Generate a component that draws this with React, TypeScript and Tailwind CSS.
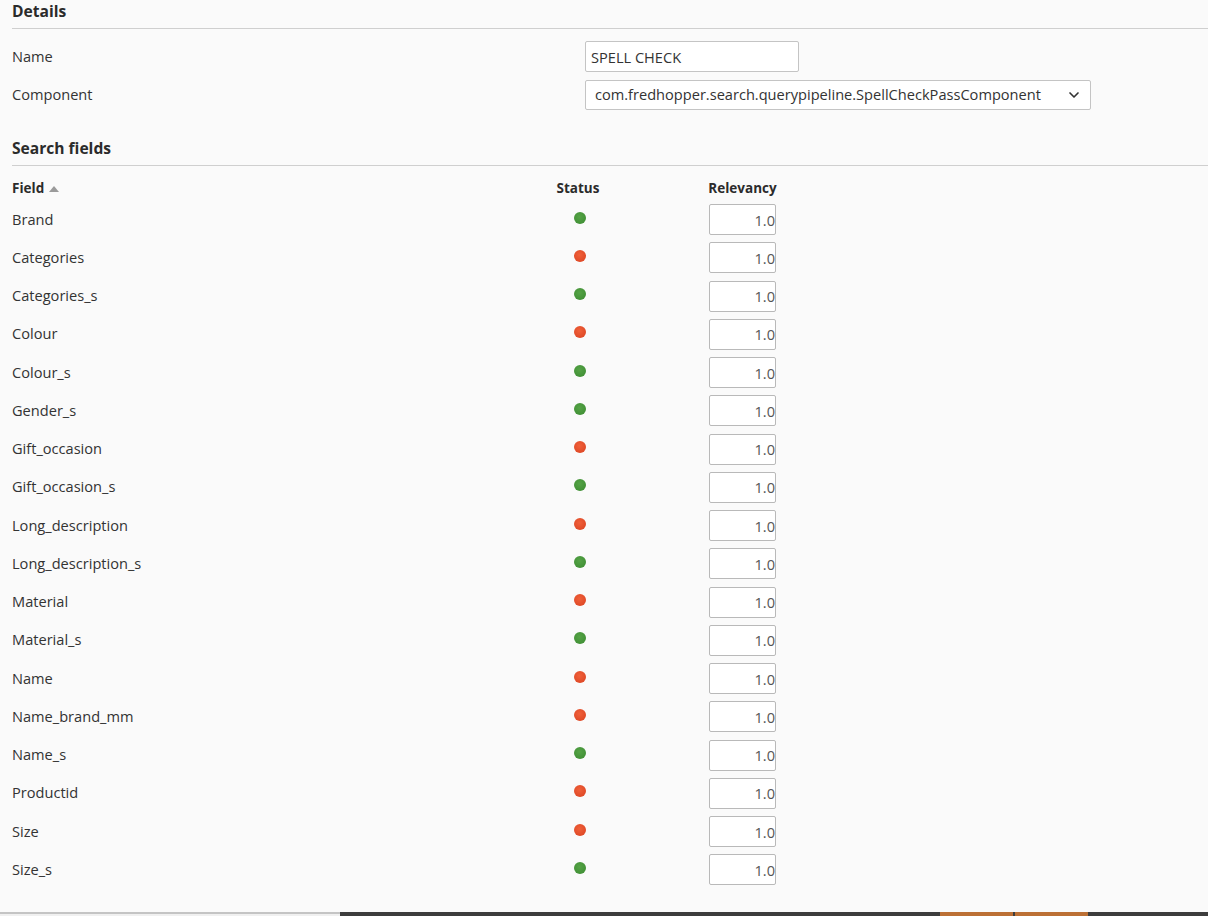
import { ChevronDown } from "lucide-react";

type Field = { name: string; active: boolean; relevancy: string };

const FIELDS: Field[] = [
  { name: "Brand", active: true, relevancy: "1.0" },
  { name: "Categories", active: false, relevancy: "1.0" },
  { name: "Categories_s", active: true, relevancy: "1.0" },
  { name: "Colour", active: false, relevancy: "1.0" },
  { name: "Colour_s", active: true, relevancy: "1.0" },
  { name: "Gender_s", active: true, relevancy: "1.0" },
  { name: "Gift_occasion", active: false, relevancy: "1.0" },
  { name: "Gift_occasion_s", active: true, relevancy: "1.0" },
  { name: "Long_description", active: false, relevancy: "1.0" },
  { name: "Long_description_s", active: true, relevancy: "1.0" },
  { name: "Material", active: false, relevancy: "1.0" },
  { name: "Material_s", active: true, relevancy: "1.0" },
  { name: "Name", active: false, relevancy: "1.0" },
  { name: "Name_brand_mm", active: false, relevancy: "1.0" },
  { name: "Name_s", active: true, relevancy: "1.0" },
  { name: "Productid", active: false, relevancy: "1.0" },
  { name: "Size", active: false, relevancy: "1.0" },
  { name: "Size_s", active: true, relevancy: "1.0" },
];

function StatusDot({ active }: { active: boolean }) {
  return (
    <span
      className={`block w-[12px] h-[12px] mb-[4px] rounded-full ${
        active
          ? "bg-[radial-gradient(circle_at_45%_40%,#55a346,#3a8a30)]"
          : "bg-[radial-gradient(circle_at_45%_40%,#f0603a,#d9411f)]"
      }`}
    />
  );
}

function SectionTitle({ children }: { children: string }) {
  return (
    <div className="ml-3 h-[29px] border-b border-[#cfcfcf] text-[15.6px] font-bold leading-[22px] text-[#2b2b2b]">
      {children}
    </div>
  );
}

export default function App() {
  return (
    <div className="h-[916px] flex flex-col bg-[#fafafa] font-['Open_Sans',sans-serif] text-[14.6px] text-[#333]">
      <div className="flex-1">
        {/* Details */}
        <SectionTitle>Details</SectionTitle>
        <div className="mt-3 flex items-center h-[31px]">
          <div className="w-[585px] pl-3">Name</div>
          <input
            defaultValue="SPELL CHECK"
            className="w-[214px] h-[31px] px-[5px] bg-white border border-[#c4c4c4] rounded-[2px] text-[14.6px] text-[#333] outline-none"
          />
        </div>
        <div className="mt-[8px] flex items-center h-[30px]">
          <div className="w-[585px] pl-3">Component</div>
          <div className="w-[506px] h-[30px] pl-[9px] pr-[8px] bg-white border border-[#c4c4c4] rounded-[2px] flex items-center justify-between">
            <span>com.fredhopper.search.querypipeline.SpellCheckPassComponent</span>
            <ChevronDown className="w-4 h-4 text-[#333]" strokeWidth={2.5} />
          </div>
        </div>

        {/* Search fields */}
        <div className="mt-[27px]">
          <SectionTitle>Search fields</SectionTitle>
        </div>
        <div className="mt-[10px] flex items-center h-[24px] text-[13.5px] font-bold text-[#2b2b2b]">
          <div className="w-[548px] pl-3 flex items-center gap-[5px]">
            Field
            <svg width="10" height="6" viewBox="0 0 10 6" className="mt-[1px]">
              <path d="M5 0 L10 6 L0 6 Z" fill="#9a9a9a" />
            </svg>
          </div>
          <div className="w-[60px] text-center">Status</div>
          <div className="ml-[92px] w-[85px] text-center">Relevancy</div>
        </div>
        {FIELDS.map((f) => (
          <div key={f.name} className="flex items-center h-[38.25px] pt-[1px]">
            <div className="w-[548px] pl-3">{f.name}</div>
            <div className="w-[64px] flex justify-center">
              <StatusDot active={f.active} />
            </div>
            <div className="ml-[97px]">
              <input
                defaultValue={f.relevancy}
                className="w-[67px] h-[31px] pl-1 pr-0 bg-white border border-[#b9b9b9] rounded-[2px] text-right text-[14.6px] text-[#555] outline-none"
              />
            </div>
          </div>
        ))}
      </div>

      {/* bottom strip */}
      <div className="h-[4px] flex">
        <div className="w-[340px] border-t-2 border-[#c4c4c4] bg-[#f0f0f0]" />
        <div className="w-[600px] bg-[#3d3d3d]" />
        <div className="w-[73px] bg-[#bc7035]" />
        <div className="w-[2px] bg-[#3d3d3d]" />
        <div className="w-[73px] bg-[#bc7035]" />
        <div className="flex-1 bg-[#3d3d3d]" />
      </div>
    </div>
  );
}
